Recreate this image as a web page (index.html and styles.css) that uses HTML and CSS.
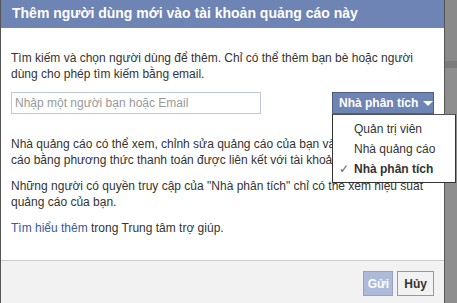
FILE: index.html
```html
<!DOCTYPE html>
<html lang="vi">
<head>
  <meta charset="UTF-8">
  <meta name="viewport" content="width=device-width, initial-scale=1.0">
  <title>Thêm người dùng</title>
  <link rel="stylesheet" href="styles.css">
</head>
<body>
  <div class="dialog">
    <!-- Dialog title -->
    <div class="dialog-header">Thêm người dùng mới vào tài khoản quảng cáo này</div>

    <!-- Dialog content -->
    <div class="dialog-body">
      <p class="text">Tìm kiếm và chọn người dùng để thêm. Chỉ có thể thêm bạn bè hoặc người dùng cho phép tìm kiếm bằng email.</p>

      <div class="search-row">
        <input type="text" class="search" placeholder="Nhập một người bạn hoặc Email">
        <div class="select">
          <button class="select-button">Nhà phân tích <span class="arrow"></span></button>
          <ul class="menu">
            <li class="menu-item">Quản trị viên</li>
            <li class="menu-item">Nhà quảng cáo</li>
            <li class="menu-item selected"><span class="check">✓</span>Nhà phân tích</li>
          </ul>
        </div>
      </div>

      <p class="text text-narrow">Nhà quảng cáo có thể xem, chỉnh sửa quảng cáo của bạn và tạo quảng cáo bằng phương thức thanh toán được liên kết với tài khoản.</p>
      <p class="text">Những người có quyền truy cập của "Nhà phân tích" chỉ có thể xem hiệu suất quảng cáo của bạn.</p>
      <p class="text"><a href="#" class="link">Tìm hiểu thêm</a> trong Trung tâm trợ giúp.</p>
    </div>

    <!-- Dialog buttons -->
    <div class="dialog-footer">
      <button class="btn btn-primary" disabled>Gửi</button>
      <button class="btn">Hủy</button>
    </div>
  </div>
</body>
</html>
```

FILE: styles.css
```css
/* Page behind the dialog */
body {
  margin: 0;
  font-family: "Liberation Sans", Arial, sans-serif;
  font-size: 12px;
  color: #333;
  background: linear-gradient(to bottom, #8a8a8a 0, #8a8a8a 61px, #7b7b7b 61px, #7b7b7b 68px, #8e8e8e 68px);
  height: 303px;
  overflow: hidden;
}

/* Dialog box */
.dialog {
  width: 443px;
  background: #fff;
  border: 1px solid #555;
  border-top: none;
}

.dialog-header {
  height: 28px;
  line-height: 27px;
  padding: 0 11px;
  background: #6d84b4;
  color: #fff;
  font-size: 14px;
  font-weight: bold;
}

.dialog-body {
  padding: 22px 10px 24px 10px;
}

.text {
  margin: 0 0 10px 0;
  line-height: 16px;
  padding-right: 8px;
}

.text-narrow {
  padding-right: 26px;
}

.text:last-child {
  margin-bottom: 0;
}

.link {
  color: #3b5998;
  text-decoration: none;
}

/* Search field and role picker */
.search-row {
  display: flex;
  justify-content: space-between;
  align-items: center;
  margin: 8px 0 22px 0;
}

.search {
  width: 250px;
  height: 22px;
  box-sizing: border-box;
  margin: 0;
  padding: 0 3px;
  border: 1px solid #bdc7d8;
  font-family: inherit;
  font-size: 12px;
  color: #333;
}

.search::placeholder {
  color: #999;
}

.select {
  position: relative;
}

.select-button {
  display: flex;
  align-items: center;
  height: 22px;
  width: 102px;
  margin: 0;
  padding: 0 0 0 6px;
  border: 1px solid #4a5f8c;
  background: #6d84b4;
  color: #fff;
  font-family: inherit;
  font-size: 12px;
  font-weight: bold;
  white-space: nowrap;
}

.arrow {
  width: 0;
  height: 0;
  margin-left: 5px;
  border-left: 5px solid transparent;
  border-right: 5px solid transparent;
  border-top: 5px solid #fff;
}

/* Open dropdown menu */
.menu {
  position: absolute;
  top: 100%;
  left: 0;
  width: 122px;
  margin: 0;
  padding: 4px 0 3px 0;
  list-style: none;
  background: #fff;
  border: 1px solid #333;
  border-top-color: #555;
}

.menu-item {
  position: relative;
  height: 20px;
  line-height: 20px;
  padding-left: 21px;
  font-size: 12px;
  color: #333;
}

.menu-item.selected {
  font-weight: bold;
}

.check {
  position: absolute;
  left: 6px;
  top: 0;
  color: #666;
  font-weight: normal;
}

/* Footer */
.dialog-footer {
  display: flex;
  justify-content: flex-end;
  gap: 4px;
  height: 44px;
  padding: 10px 10px 0 0;
  box-sizing: border-box;
  background: #f2f2f2;
  border-top: 1px solid #ccc;
}

.btn {
  height: 25px;
  margin: 0;
  padding: 0 6px;
  border: 1px solid #999;
  background: #f2f2f2;
  color: #333;
  font-family: inherit;
  font-size: 12px;
  font-weight: bold;
}

.btn-primary {
  width: 30px;
  padding: 0;
  background: #adbad9;
  border-color: #94a2c6;
  color: #fff;
}
```
